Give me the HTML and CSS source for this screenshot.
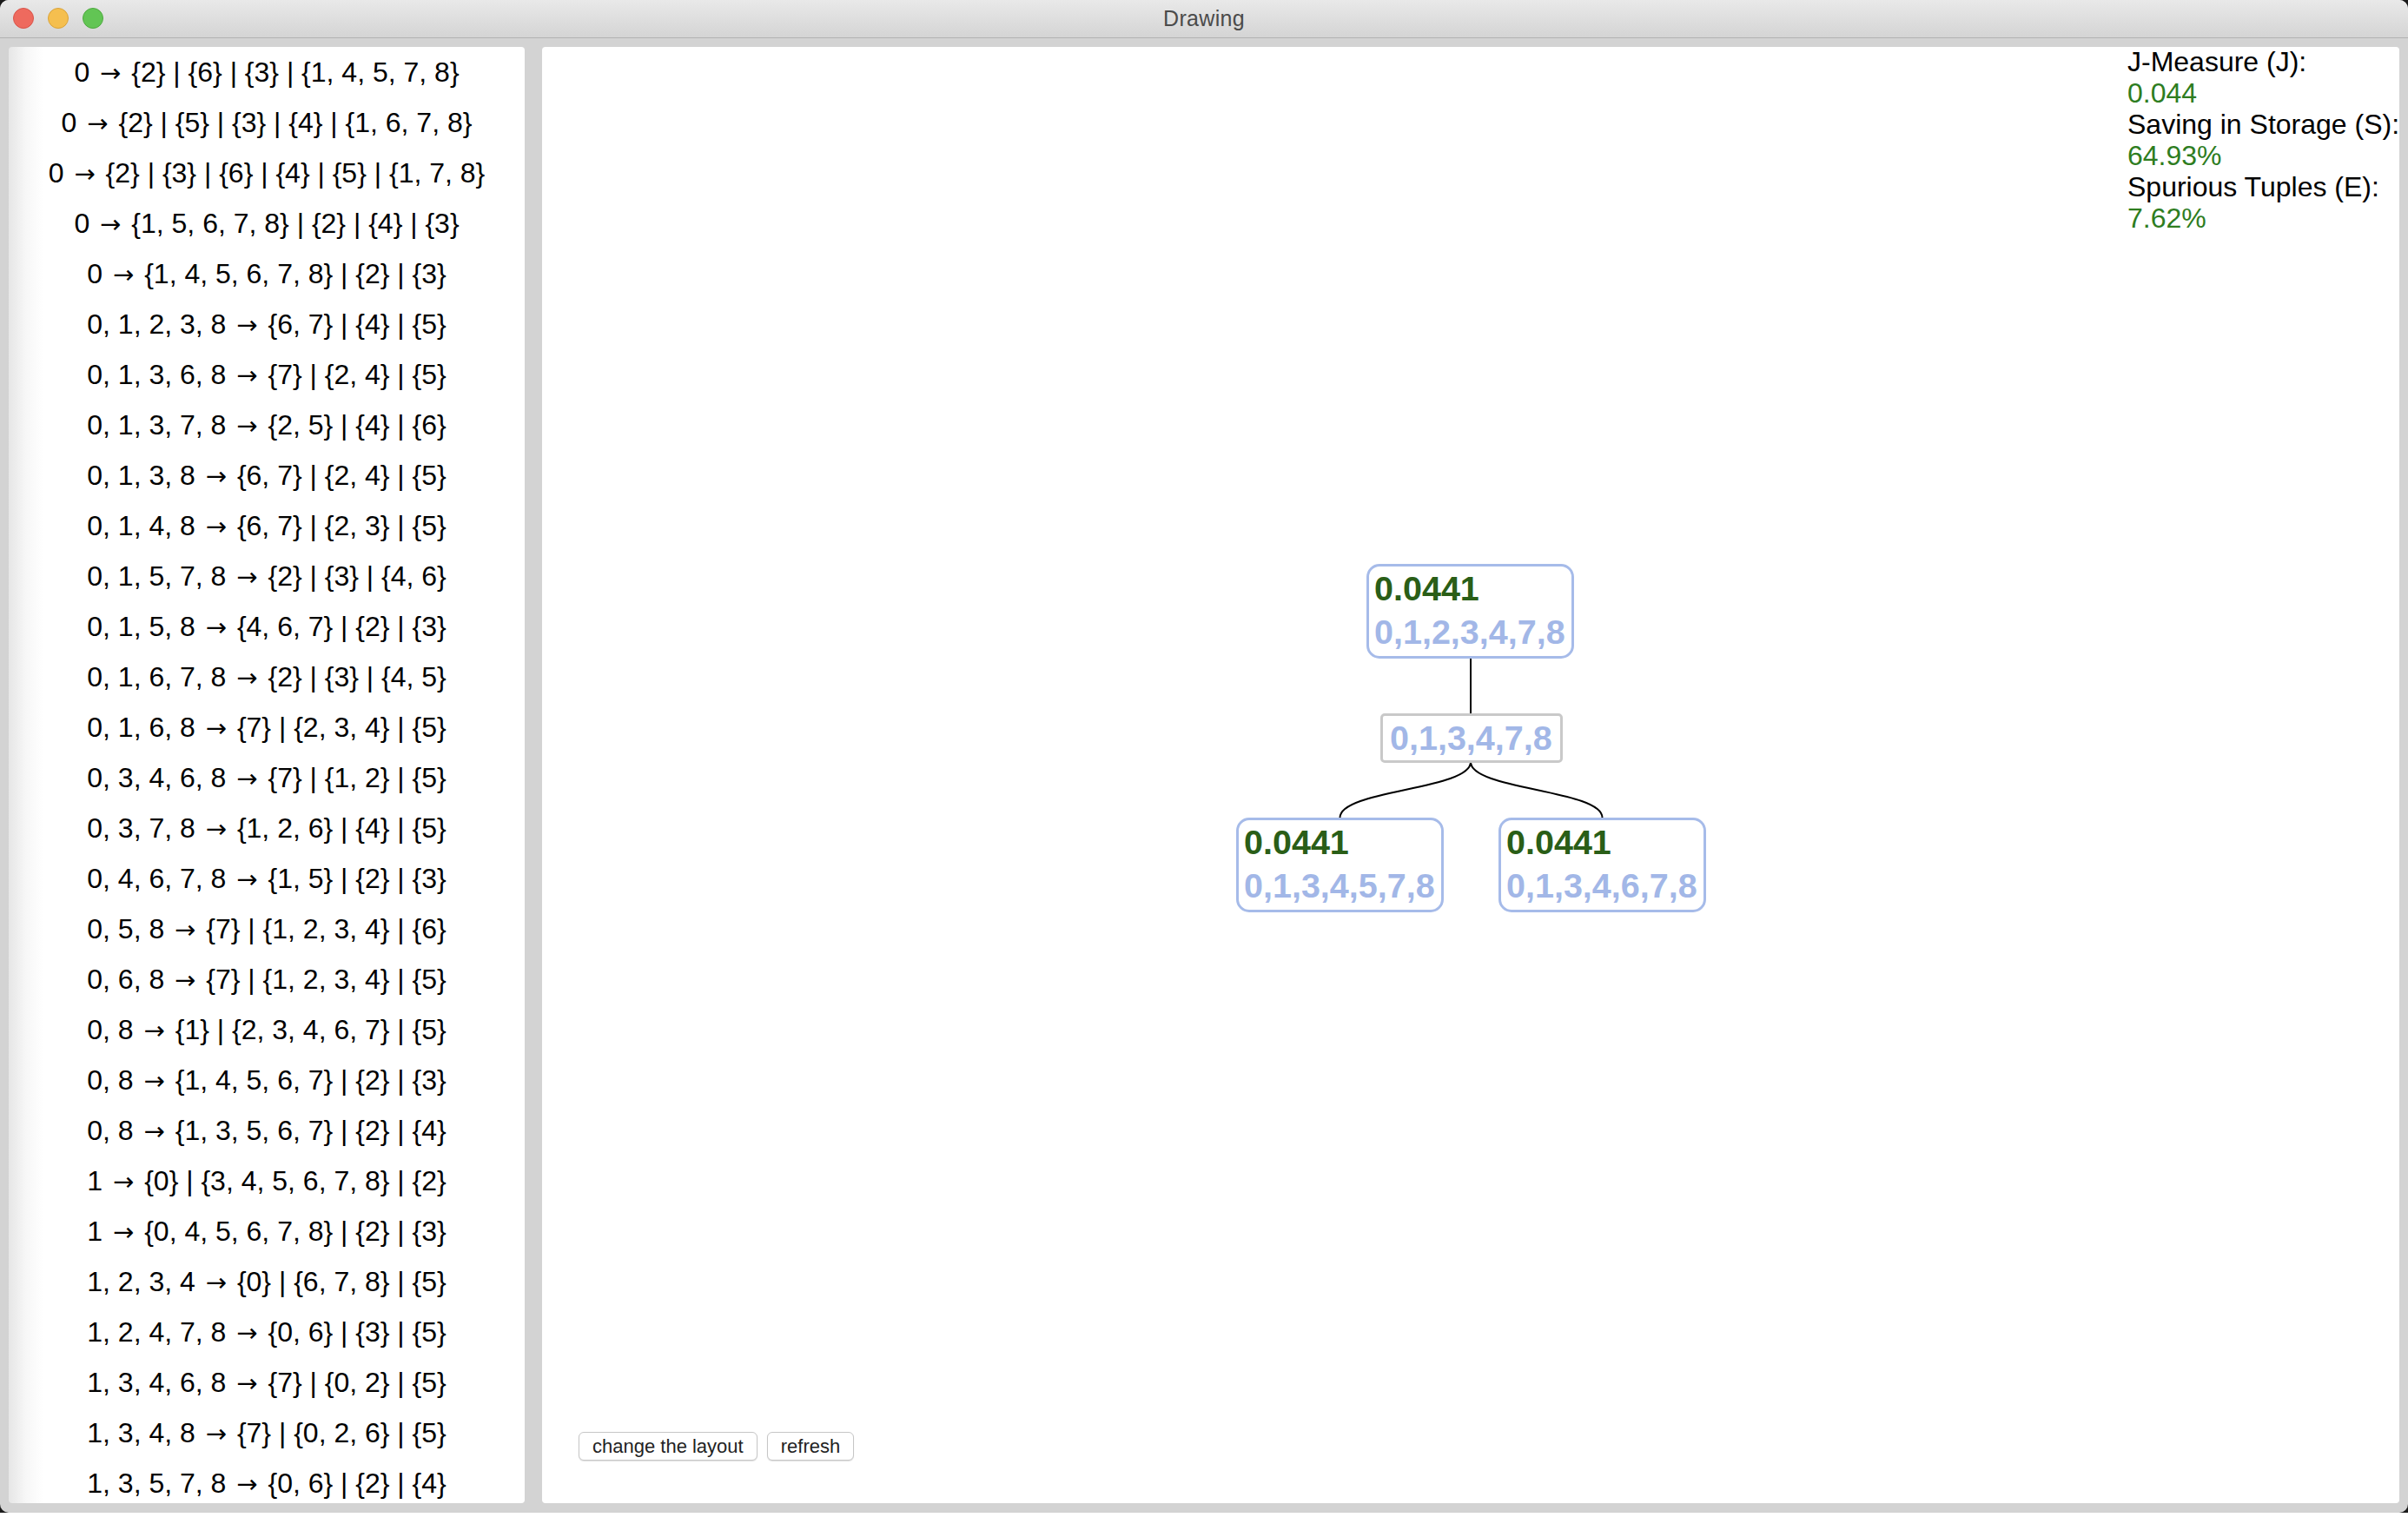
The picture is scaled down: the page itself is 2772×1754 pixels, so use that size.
FILE: index.html
```html
<!DOCTYPE html>
<html>
<head>
<meta charset="utf-8">
<title>Drawing</title>
<link rel="stylesheet" href="styles.css">
</head>
<body>
<div class="screen">
  <div class="window">
    <div class="titlebar">
      <div class="lights">
        <span class="light red"></span>
        <span class="light yellow"></span>
        <span class="light green"></span>
      </div>
      <div class="title">Drawing</div>
    </div>
    <div class="content">
      <div class="list-panel">
        <div class="row">0 <span class="arr">→</span> {2} | {6} | {3} | {1, 4, 5, 7, 8}</div>
        <div class="row">0 <span class="arr">→</span> {2} | {5} | {3} | {4} | {1, 6, 7, 8}</div>
        <div class="row">0 <span class="arr">→</span> {2} | {3} | {6} | {4} | {5} | {1, 7, 8}</div>
        <div class="row">0 <span class="arr">→</span> {1, 5, 6, 7, 8} | {2} | {4} | {3}</div>
        <div class="row">0 <span class="arr">→</span> {1, 4, 5, 6, 7, 8} | {2} | {3}</div>
        <div class="row">0, 1, 2, 3, 8 <span class="arr">→</span> {6, 7} | {4} | {5}</div>
        <div class="row">0, 1, 3, 6, 8 <span class="arr">→</span> {7} | {2, 4} | {5}</div>
        <div class="row">0, 1, 3, 7, 8 <span class="arr">→</span> {2, 5} | {4} | {6}</div>
        <div class="row">0, 1, 3, 8 <span class="arr">→</span> {6, 7} | {2, 4} | {5}</div>
        <div class="row">0, 1, 4, 8 <span class="arr">→</span> {6, 7} | {2, 3} | {5}</div>
        <div class="row">0, 1, 5, 7, 8 <span class="arr">→</span> {2} | {3} | {4, 6}</div>
        <div class="row">0, 1, 5, 8 <span class="arr">→</span> {4, 6, 7} | {2} | {3}</div>
        <div class="row">0, 1, 6, 7, 8 <span class="arr">→</span> {2} | {3} | {4, 5}</div>
        <div class="row">0, 1, 6, 8 <span class="arr">→</span> {7} | {2, 3, 4} | {5}</div>
        <div class="row">0, 3, 4, 6, 8 <span class="arr">→</span> {7} | {1, 2} | {5}</div>
        <div class="row">0, 3, 7, 8 <span class="arr">→</span> {1, 2, 6} | {4} | {5}</div>
        <div class="row">0, 4, 6, 7, 8 <span class="arr">→</span> {1, 5} | {2} | {3}</div>
        <div class="row">0, 5, 8 <span class="arr">→</span> {7} | {1, 2, 3, 4} | {6}</div>
        <div class="row">0, 6, 8 <span class="arr">→</span> {7} | {1, 2, 3, 4} | {5}</div>
        <div class="row">0, 8 <span class="arr">→</span> {1} | {2, 3, 4, 6, 7} | {5}</div>
        <div class="row">0, 8 <span class="arr">→</span> {1, 4, 5, 6, 7} | {2} | {3}</div>
        <div class="row">0, 8 <span class="arr">→</span> {1, 3, 5, 6, 7} | {2} | {4}</div>
        <div class="row">1 <span class="arr">→</span> {0} | {3, 4, 5, 6, 7, 8} | {2}</div>
        <div class="row">1 <span class="arr">→</span> {0, 4, 5, 6, 7, 8} | {2} | {3}</div>
        <div class="row">1, 2, 3, 4 <span class="arr">→</span> {0} | {6, 7, 8} | {5}</div>
        <div class="row">1, 2, 4, 7, 8 <span class="arr">→</span> {0, 6} | {3} | {5}</div>
        <div class="row">1, 3, 4, 6, 8 <span class="arr">→</span> {7} | {0, 2} | {5}</div>
        <div class="row">1, 3, 4, 8 <span class="arr">→</span> {7} | {0, 2, 6} | {5}</div>
        <div class="row">1, 3, 5, 7, 8 <span class="arr">→</span> {0, 6} | {2} | {4}</div>
      </div>
      <div class="canvas-panel">
        <svg class="links" width="2138" height="1676" viewBox="0 0 2138 1676">
          <path d="M1069 704 L1069 768" />
          <path d="M1069 823 C1069 855, 918.5 855, 918.5 887" />
          <path d="M1069 823 C1069 855, 1220.5 855, 1220.5 887" />
        </svg>
        <div class="node node-root">
          <div class="score">0.0441</div>
          <div class="attrs">0,1,2,3,4,7,8</div>
        </div>
        <div class="sep node-sep">
          <div class="attrs">0,1,3,4,7,8</div>
        </div>
        <div class="node node-left">
          <div class="score">0.0441</div>
          <div class="attrs">0,1,3,4,5,7,8</div>
        </div>
        <div class="node node-right">
          <div class="score">0.0441</div>
          <div class="attrs">0,1,3,4,6,7,8</div>
        </div>
        <div class="metrics">
          <div class="label">J-Measure (J):</div>
          <div class="value">0.044</div>
          <div class="label">Saving in Storage (S):</div>
          <div class="value">64.93%</div>
          <div class="label">Spurious Tuples (E):</div>
          <div class="value">7.62%</div>
        </div>
        <div class="buttons">
          <button class="btn">change the layout</button>
          <button class="btn">refresh</button>
        </div>
      </div>
    </div>
  </div>
</div>
</body>
</html>
```
FILE: styles.css
```css
html, body {
  margin: 0;
  padding: 0;
  background: #ffffff;
}

body {
  width: 2772px;
  height: 1754px;
  overflow: hidden;
  font-family: "Liberation Sans", Arial, Helvetica, sans-serif;
}

.screen {
  width: 2772px;
  height: 1741px;
  background: #1a1a1a;
}

.window {
  width: 2772px;
  height: 1741px;
  border-radius: 10px;
  overflow: hidden;
  background: #d3d3d3;
  display: flex;
  flex-direction: column;
}

.titlebar {
  height: 43px;
  border-bottom: 1px solid #b2b2b2;
  background: linear-gradient(#e9e9e9, #d4d4d4);
  position: relative;
  display: flex;
  align-items: center;
  justify-content: center;
  flex: none;
}

.lights {
  position: absolute;
  left: 15px;
  top: 9px;
  display: flex;
  gap: 16px;
}

.light {
  width: 24px;
  height: 24px;
  border-radius: 50%;
  box-sizing: border-box;
}

.red { background: #ee6a5e; border: 1px solid #d8544a; }
.yellow { background: #f5bf4f; border: 1px solid #d9a33a; }
.green { background: #62c554; border: 1px solid #4ea93f; }

.title {
  font-size: 25px;
  color: #4b4b4b;
  letter-spacing: 0.3px;
}

.content {
  flex: 1;
  display: flex;
  gap: 20px;
  padding: 10px 10px 11px 10px;
  min-height: 0;
}

.list-panel {
  width: 594px;
  flex: none;
  background: linear-gradient(to right, #e6e6e6 0px, #f7f7f7 20px, #ffffff 40px);
  border-radius: 4px;
  overflow: hidden;
}

.row {
  height: 58px;
  line-height: 58px;
  text-align: center;
  font-size: 32px;
  color: #000;
  white-space: nowrap;
}

.arr {
  font-family: "DejaVu Sans", sans-serif;
  font-size: 29px;
  margin: 0 3px;
}

.canvas-panel {
  flex: 1;
  background: #ffffff;
  border-radius: 4px;
  position: relative;
  overflow: hidden;
  display: flex;
  flex-direction: column;
  justify-content: flex-end;
}

.links {
  position: absolute;
  left: 0;
  top: 0;
}

.links path {
  fill: none;
  stroke: #000;
  stroke-width: 2;
}

.node, .sep {
  position: absolute;
  background: #fff;
  font-weight: bold;
  font-size: 39.5px;
  line-height: 50px;
  white-space: nowrap;
}

.node {
  border: 3px solid #a6bbe9;
  border-radius: 15px;
  padding: 0 7px 3px 6px;
}

.sep {
  border: 3px solid #c9c9c9;
  border-radius: 5px;
  padding: 0 9px 1px 8px;
}

.score { color: #2a5e17; }
.attrs { color: #a2b7e7; }

.node-root { left: 949px; top: 595px; }
.node-sep { left: 965px; top: 767px; }
.node-left { left: 799px; top: 887px; }
.node-right { left: 1101px; top: 887px; }

.metrics {
  position: absolute;
  left: 1825px;
  top: -1px;
  font-size: 32px;
  line-height: 36px;
  white-space: nowrap;
}

.label { color: #000; }
.value { color: #2e7d1f; }

.buttons {
  display: flex;
  gap: 11px;
  padding: 0 0 49px 42px;
}

.btn {
  height: 33px;
  padding: 0 15px;
  font-family: "Liberation Sans", Arial, sans-serif;
  font-size: 22px;
  color: #222;
  background: #fff;
  border: 1px solid #c6c6c6;
  border-radius: 6px;
  box-shadow: 0 1px 1px rgba(0, 0, 0, 0.12);
}
```
